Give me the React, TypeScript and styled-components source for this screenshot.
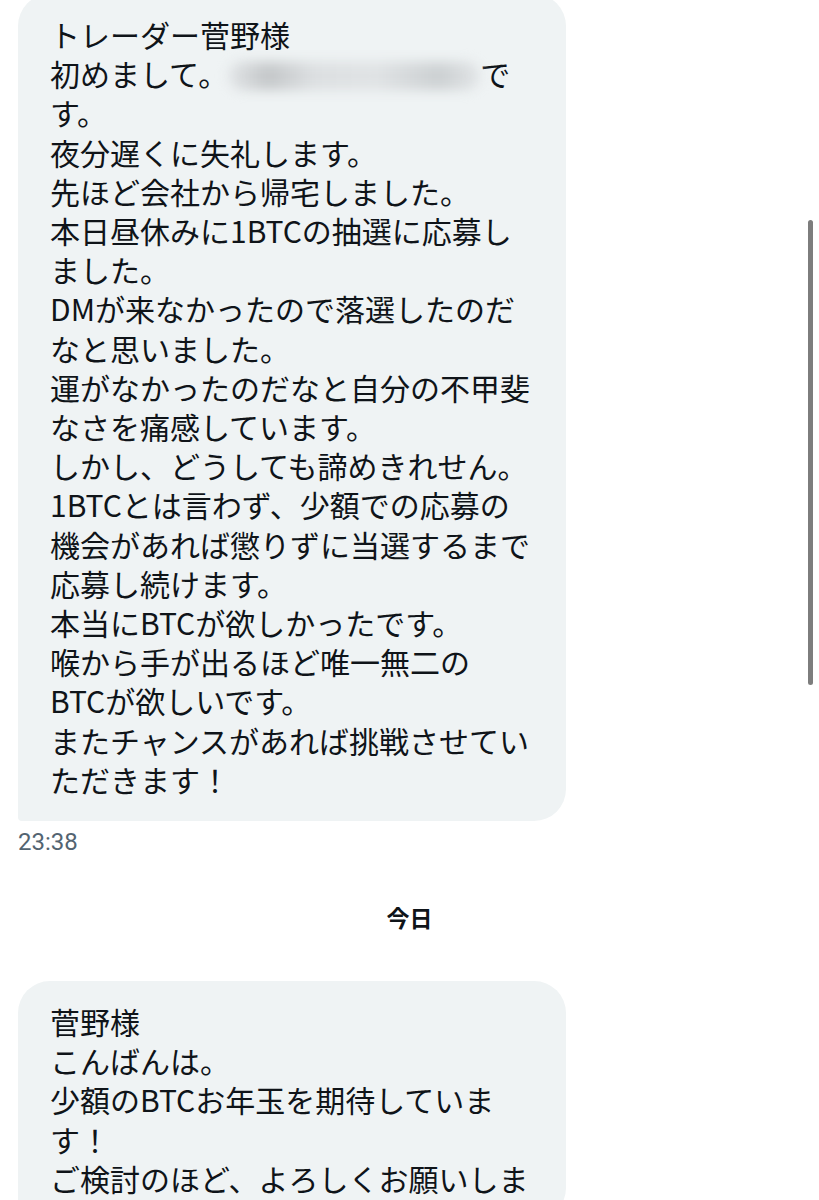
import React from "react";
import styled, { createGlobalStyle } from "styled-components";

const GlobalStyle = createGlobalStyle`
  html, body {
    margin: 0;
    padding: 0;
    background: #ffffff;
    overflow: hidden;
  }
  body {
    font-family: "Noto Sans CJK JP", "Noto Sans", sans-serif;
    color: #0f1419;
  }
`;

const Screen = styled.div`
  position: relative;
  width: 819px;
  height: 1200px;
  overflow: hidden;
  background: #ffffff;
`;

const Thread = styled.div`
  display: flex;
  flex-direction: column;
  align-items: flex-start;
  padding: 0 18px;
  margin-top: -6px;
`;

const Bubble = styled.div<{ $gap?: number }>`
  box-sizing: border-box;
  width: 548px;
  margin-top: ${(p) => p.$gap ?? 0}px;
  padding: 21px 30px 22px 32px;
  background: #eff3f4;
  border-radius: 32px 32px 32px 4px;
  font-family: "Noto Sans CJK JP", "Noto Sans", sans-serif;
  font-size: 30px;
  line-height: 39.2px;
  color: #0f1419;
`;

const Line = styled.div`
  white-space: nowrap;
`;

const Redacted = styled.span`
  display: inline-block;
  width: 252px;
  height: 28px;
  vertical-align: -4px;
  border-radius: 14px;
  background: linear-gradient(
    90deg,
    #e2e5e7 0%,
    #c4c7c9 16%,
    #dcdfe1 34%,
    #e0e3e5 58%,
    #ccd0d2 84%,
    #e2e5e7 100%
  );
  filter: blur(6px);
`;

const Timestamp = styled.div`
  margin-top: 7px;
  font-family: Roboto, "Liberation Sans", sans-serif;
  font-size: 24px;
  line-height: 28px;
  color: #536471;
`;

const DateDivider = styled.div`
  align-self: stretch;
  margin-top: 46px;
  text-align: center;
  font-family: "Noto Sans CJK JP", sans-serif;
  font-weight: 700;
  font-size: 23px;
  line-height: 30px;
  color: #0f1419;
`;

const ScrollThumb = styled.div`
  position: absolute;
  right: 6px;
  top: 220px;
  width: 5px;
  height: 465px;
  border-radius: 3px;
  background: #7d7d7d;
`;

const firstMessage: React.ReactNode[] = [
  "トレーダー菅野様",
  <>
    初めまして。
    <Redacted aria-hidden="true" />
    で
  </>,
  "す。",
  "夜分遅くに失礼します。",
  "先ほど会社から帰宅しました。",
  "本日昼休みに1BTCの抽選に応募し",
  "ました。",
  "DMが来なかったので落選したのだ",
  "なと思いました。",
  "運がなかったのだなと自分の不甲斐",
  "なさを痛感しています。",
  "しかし、どうしても諦めきれせん。",
  "1BTCとは言わず、少額での応募の",
  "機会があれば懲りずに当選するまで",
  "応募し続けます。",
  "本当にBTCが欲しかったです。",
  "喉から手が出るほど唯一無二の",
  "BTCが欲しいです。",
  "またチャンスがあれば挑戦させてい",
  "ただきます！",
];

const secondMessage: React.ReactNode[] = [
  "菅野様",
  "こんばんは。",
  "少額のBTCお年玉を期待していま",
  "す！",
  "ご検討のほど、よろしくお願いしま",
];

export default function App() {
  return (
    <Screen>
      <GlobalStyle />
      <Thread>
        <Bubble>
          {firstMessage.map((l, i) => (
            <Line key={i}>{l}</Line>
          ))}
        </Bubble>
        <Timestamp>23:38</Timestamp>
        <DateDivider>今日</DateDivider>
        <Bubble $gap={49}>
          {secondMessage.map((l, i) => (
            <Line key={i}>{l}</Line>
          ))}
        </Bubble>
      </Thread>
      <ScrollThumb />
    </Screen>
  );
}
